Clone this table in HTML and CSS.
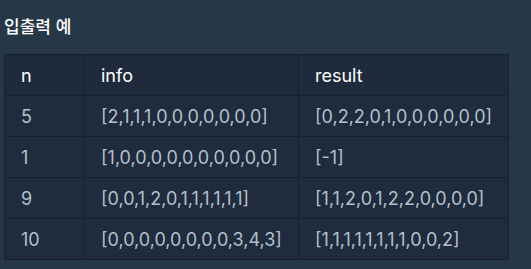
FILE: index.html
```html
<!DOCTYPE html>
<html lang="ko">
<head>
<meta charset="utf-8">
<link rel="stylesheet" href="styles.css">
</head>
<body>
<div class="page">
  <h5 class="title">입출력 예</h5>
  <table class="examples">
    <thead>
      <tr><th class="c1">n</th><th class="c2">info</th><th class="c3">result</th></tr>
    </thead>
    <tbody>
      <tr><td>5</td><td>[2,1,1,1,0,0,0,0,0,0,0]</td><td>[0,2,2,0,1,0,0,0,0,0,0]</td></tr>
      <tr><td>1</td><td>[1,0,0,0,0,0,0,0,0,0,0]</td><td>[-1]</td></tr>
      <tr><td>9</td><td>[0,0,1,2,0,1,1,1,1,1,1]</td><td>[1,1,2,0,1,2,2,0,0,0,0]</td></tr>
      <tr><td>10</td><td>[0,0,0,0,0,0,0,0,3,4,3]</td><td>[1,1,1,1,1,1,1,1,0,0,2]</td></tr>
    </tbody>
  </table>
</div>
</body>
</html>
```

FILE: styles.css
```css
html, body {
  margin: 0;
  padding: 0;
  background: #263747;
}
.page {
  padding: 14px 4px 0 4px;
}
.title {
  margin: 0 0 16px 0;
  font-family: "Noto Sans CJK KR", "Noto Sans", sans-serif;
  font-size: 17px;
  font-weight: 500;
  line-height: 24px;
  color: #ffffff;
}
.examples {
  border-collapse: collapse;
  background: #202b3d;
  font-family: Inter, "Noto Sans CJK KR", sans-serif;
  font-size: 18px;
}
.examples th, .examples td {
  border: 1px solid #172030;
  padding: 0 16px;
  height: 40px;
  text-align: left;
  white-space: nowrap;
}
.examples th {
  color: #ffffff;
  font-weight: 400;
  background: #1f2a3c;
}
.examples td {
  color: #b2c0cc;
}
.c1 { width: 47px; }
.c2 { width: 181px; }
.c3 { width: 177px; }
```
